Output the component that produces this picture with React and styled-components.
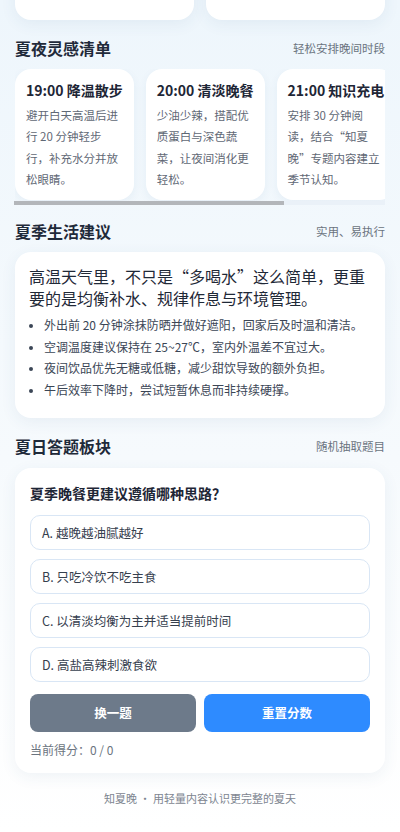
import React from "react";
import styled, { createGlobalStyle } from "styled-components";

const Global = createGlobalStyle`
  html, body { margin: 0; padding: 0; }
  body {
    background: linear-gradient(180deg, #eef6fc 0%, #f6fafd 55%, #ffffff 100%);
    font-family: "Noto Sans CJK SC", "Noto Sans", sans-serif;
    color: #1f2a3a;
    min-height: 832px;
    overflow: hidden;
  }
`;

const Page = styled.div`
  padding: 0 15px 24px;
  display: flex;
  flex-direction: column;
`;

const TopGrid = styled.div`
  display: grid;
  grid-template-columns: 1fr 1fr;
  gap: 12px;
  margin-top: -40px;
`;

const Card = styled.div`
  background: #ffffff;
  border-radius: 16px;
  box-shadow: 0 4px 16px rgba(40, 80, 130, 0.07);
`;

const StatCard = styled(Card)`
  height: 60px;
`;

const Section = styled.section`
  margin-top: ${(p) => p.$top}px;
  display: flex;
  flex-direction: column;
  gap: ${(p) => p.$gap || 10}px;
`;

const SectionHead = styled.div`
  display: flex;
  align-items: center;
  justify-content: space-between;
  height: 22px;
`;

const SectionTitle = styled.h2`
  margin: 0;
  font-size: 16px;
  font-weight: 700;
  color: #1f2a3a;
  line-height: 22px;
`;

const SectionNote = styled.span`
  font-size: 11.5px;
  color: #6b7480;
`;

const ScrollArea = styled.div`
  display: flex;
  flex-direction: column;
`;

const Scroller = styled.div`
  display: flex;
  gap: 12px;
  overflow-x: auto;
  padding-bottom: 1px;
  scrollbar-width: none;
  &::-webkit-scrollbar { display: none; }
`;

const ScrollTrack = styled.div`
  height: 4px;
  background: #eaf1f8;
  margin-left: -1px;
`;

const ScrollThumb = styled.div`
  height: 100%;
  background: #b3b6ba;
`;

const IdeaCard = styled(Card)`
  flex: 0 0 118px;
  height: 131px;
  box-sizing: border-box;
  padding: 11px 11px;
  box-shadow: 0 3px 10px rgba(40, 80, 130, 0.06);
`;

const IdeaTitle = styled.div`
  font-size: 14px;
  font-weight: 700;
  color: #1e2636;
  line-height: 20px;
  white-space: nowrap;
`;

const IdeaText = styled.p`
  margin: 5px 0 0;
  font-size: 11.5px;
  line-height: 21.3px;
  color: #5f6875;
`;

const AdviceCard = styled(Card)`
  padding: 13px 14px 17px;
`;

const Lead = styled.p`
  margin: 0;
  font-size: 16px;
  line-height: 22px;
  color: #1f2937;
`;

const Tips = styled.ul`
  margin: 5px 0 0;
  padding-left: 15px;
`;

const Tip = styled.li`
  font-size: 12px;
  line-height: 21.7px;
  color: #3b4656;
  white-space: nowrap;
  &::marker { color: #3b4656; font-size: 11px; }
`;

const QuizCard = styled(Card)`
  padding: 15px 15px 13px;
  display: flex;
  flex-direction: column;
`;

const Question = styled.div`
  font-size: 14px;
  font-weight: 700;
  line-height: 20px;
  color: #1e2636;
  margin-bottom: 12px;
`;

const Options = styled.div`
  display: flex;
  flex-direction: column;
  gap: 9px;
`;

const Option = styled.div`
  border: 1px solid #d9e6f5;
  border-radius: 10px;
  padding: 7px 11px;
  font-size: 12.5px;
  line-height: 19px;
  color: #36404e;
  background: #fff;
`;

const Buttons = styled.div`
  display: grid;
  grid-template-columns: 1fr 1fr;
  gap: 8px;
  margin-top: 12px;
`;

const Btn = styled.button`
  height: 38px;
  border: none;
  border-radius: 8px;
  background: ${(p) => (p.$primary ? "#2e8bff" : "#6d7a8a")};
  color: #fff;
  font-family: inherit;
  font-size: 12.5px;
  font-weight: 700;
`;

const Score = styled.div`
  margin-top: 8px;
  font-size: 12px;
  line-height: 20px;
  color: #6b7480;
`;

const Footer = styled.div`
  margin-top: 17px;
  text-align: center;
  font-size: 11px;
  line-height: 16px;
  color: #7d8590;
`;

const ideas = [
  { t: "19:00 降温散步", d: "避开白天高温后进行 20 分钟轻步行，补充水分并放松眼睛。" },
  { t: "20:00 清淡晚餐", d: "少油少辣，搭配优质蛋白与深色蔬菜，让夜间消化更轻松。" },
  { t: "21:00 知识充电", d: "安排 30 分钟阅读，结合“知夏晚”专题内容建立季节认知。" },
  { t: "22:00 安睡准备", d: "调暗灯光，放下手机，用温水洗漱帮助身体进入休息状态。" },
];

const tips = [
  "外出前 20 分钟涂抹防晒并做好遮阳，回家后及时温和清洁。",
  "空调温度建议保持在 25~27℃，室内外温差不宜过大。",
  "夜间饮品优先无糖或低糖，减少甜饮导致的额外负担。",
  "午后效率下降时，尝试短暂休息而非持续硬撑。",
];

const options = [
  "A. 越晚越油腻越好",
  "B. 只吃冷饮不吃主食",
  "C. 以清淡均衡为主并适当提前时间",
  "D. 高盐高辣刺激食欲",
];

const CARD_W = 118;
const GAP = 12;
const VIEW_W = 370;

export default function App() {
  const contentW = ideas.length * CARD_W + (ideas.length - 1) * GAP;
  const thumbPct = Math.min(100, (VIEW_W / contentW) * 100);
  return (
    <>
      <Global />
      <Page>
        <TopGrid>
          <StatCard />
          <StatCard />
        </TopGrid>

        <Section $top={17}>
          <SectionHead>
            <SectionTitle>夏夜灵感清单</SectionTitle>
            <SectionNote>轻松安排晚间时段</SectionNote>
          </SectionHead>
          <ScrollArea>
            <Scroller>
              {ideas.map((i) => (
                <IdeaCard key={i.t}>
                  <IdeaTitle>{i.t}</IdeaTitle>
                  <IdeaText>{i.d}</IdeaText>
                </IdeaCard>
              ))}
            </Scroller>
            <ScrollTrack>
              <ScrollThumb style={{ width: `${thumbPct}%` }} />
            </ScrollTrack>
          </ScrollArea>
        </Section>

        <Section $top={15}>
          <SectionHead>
            <SectionTitle>夏季生活建议</SectionTitle>
            <SectionNote>实用、易执行</SectionNote>
          </SectionHead>
          <AdviceCard>
            <Lead>高温天气里，不只是“多喝水”这么简单，更重要的是均衡补水、规律作息与环境管理。</Lead>
            <Tips>
              {tips.map((t) => (
                <Tip key={t}>{t}</Tip>
              ))}
            </Tips>
          </AdviceCard>
        </Section>

        <Section $top={17} $gap={11}>
          <SectionHead>
            <SectionTitle>夏日答题板块</SectionTitle>
            <SectionNote>随机抽取题目</SectionNote>
          </SectionHead>
          <QuizCard>
            <Question>夏季晚餐更建议遵循哪种思路？</Question>
            <Options>
              {options.map((o) => (
                <Option key={o}>{o}</Option>
              ))}
            </Options>
            <Buttons>
              <Btn>换一题</Btn>
              <Btn $primary>重置分数</Btn>
            </Buttons>
            <Score>当前得分：0 / 0</Score>
          </QuizCard>
        </Section>

        <Footer>知夏晚 · 用轻量内容认识更完整的夏天</Footer>
      </Page>
    </>
  );
}
